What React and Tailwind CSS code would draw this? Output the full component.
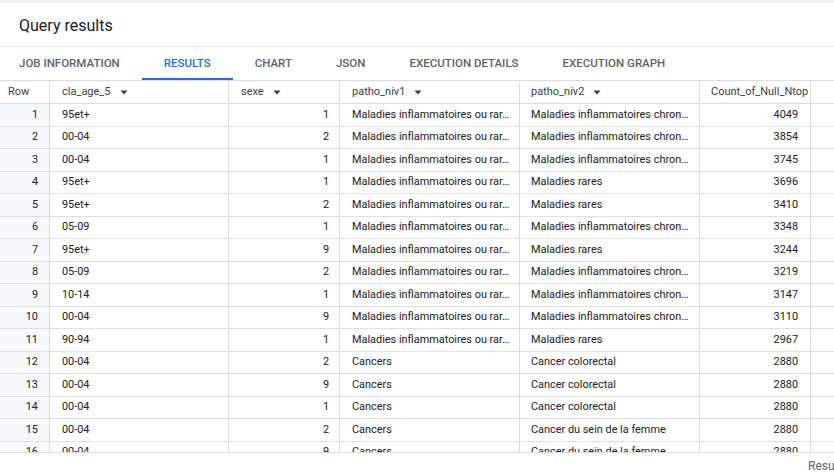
import React from 'react';

const MIR = 'Maladies inflammatoires ou rar…';
const MIC = 'Maladies inflammatoires chron…';
const RARES = 'Maladies rares';

const rows = [
  ['95et+', 1, MIR, MIC, 4049],
  ['00-04', 2, MIR, MIC, 3854],
  ['00-04', 1, MIR, MIC, 3745],
  ['95et+', 1, MIR, RARES, 3696],
  ['95et+', 2, MIR, RARES, 3410],
  ['05-09', 1, MIR, MIC, 3348],
  ['95et+', 9, MIR, RARES, 3244],
  ['05-09', 2, MIR, MIC, 3219],
  ['10-14', 1, MIR, MIC, 3147],
  ['00-04', 9, MIR, MIC, 3110],
  ['90-94', 1, MIR, RARES, 2967],
  ['00-04', 2, 'Cancers', 'Cancer colorectal', 2880],
  ['00-04', 9, 'Cancers', 'Cancer colorectal', 2880],
  ['00-04', 1, 'Cancers', 'Cancer colorectal', 2880],
  ['00-04', 2, 'Cancers', 'Cancer du sein de la femme', 2880],
  ['00-04', 9, 'Cancers', 'Cancer du sein de la femme', 2880],
];

const tabs = ['JOB INFORMATION', 'RESULTS', 'CHART', 'JSON', 'EXECUTION DETAILS', 'EXECUTION GRAPH'];

const Caret = () => (
  <svg width="8" height="5" viewBox="0 0 8 5" className="ml-[9px] shrink-0">
    <path d="M0.5 0.5 L7.5 0.5 L4 4.5 Z" fill="#3c4043" />
  </svg>
);

const cols = 'grid grid-cols-[50px_179px_111px_180px_180px_111px]';

const App = () => {
  return (
    <div className="w-[834px] h-[476px] bg-white overflow-hidden flex flex-col text-[#202124]" style={{ fontFamily: 'Roboto, "Liberation Sans", sans-serif' }}>
      <div className="h-[3px] bg-[#f1f3f4] shrink-0" />

      {/* Title */}
      <div className="h-[44px] flex items-center pl-[19px] pt-[2px] border-b border-[#e0e0e0] shrink-0">
        <h1 className="text-[16px] text-[#202124] leading-none">Query results</h1>
      </div>

      {/* Tabs */}
      <div className="flex h-[34px] shrink-0 border-b border-[#dadce0]">
        {tabs.map((t, i) => (
          <div
            key={t}
            className={`flex items-center pt-[3px] text-[11.5px] font-medium border-b-2 ${i === 0 ? 'pl-[19px] pr-[22px]' : 'px-[22px]'} ${t === 'RESULTS' ? 'text-[#1a73e8] border-[#1a73e8]' : 'text-[#5f6368] border-transparent'}`}
          >
            {t}
          </div>
        ))}
      </div>

      {/* Table */}
      <div className="h-[372px] overflow-hidden shrink-0 border-b border-[#dadce0]">
        <div className={`${cols} h-[23px] pt-[1px] text-[11px] text-[#3c4043] border-b border-[#dadce0]`}>
          <div className="flex items-center pl-2 border-r border-[#dadce0]">Row</div>
          <div className="flex items-center pl-3 border-r border-[#dadce0]">cla_age_5<Caret /></div>
          <div className="flex items-center pl-3 border-r border-[#dadce0]">sexe<Caret /></div>
          <div className="flex items-center pl-3 border-r border-[#dadce0]">patho_niv1<Caret /></div>
          <div className="flex items-center pl-[11px] border-r border-[#dadce0]">patho_niv2<Caret /></div>
          <div className="flex items-center pl-[11px] border-r border-[#dadce0] whitespace-nowrap">Count_of_Null_Ntop</div>
        </div>
        {rows.map((r, i) => (
          <div key={i} className={`${cols} h-[22.5px] text-[10.9px] border-b border-[#e0e0e0]`}>
            <div className="flex items-center justify-end pr-[11px] bg-[#f8f9fa] border-r border-[#dadce0]">{i + 1}</div>
            <div className="flex items-center pl-3 border-r border-[#dadce0]">{r[0]}</div>
            <div className="flex items-center justify-end pr-[10px] border-r border-[#dadce0]">{r[1]}</div>
            <div className="flex items-center pl-3 border-r border-[#dadce0] whitespace-nowrap overflow-hidden">{r[2]}</div>
            <div className="flex items-center pl-[11px] border-r border-[#dadce0] whitespace-nowrap overflow-hidden">{r[3]}</div>
            <div className="flex items-center justify-end pr-3 border-r border-[#dadce0]">{r[4]}</div>
          </div>
        ))}
      </div>

      {/* Footer */}
      <div className="flex-1 flex items-center pl-[808px] pt-[3px] overflow-hidden">
        <span className="text-[12px] text-[#5f6368] whitespace-nowrap">Results per page:</span>
      </div>
    </div>
  );
};

export default App;
